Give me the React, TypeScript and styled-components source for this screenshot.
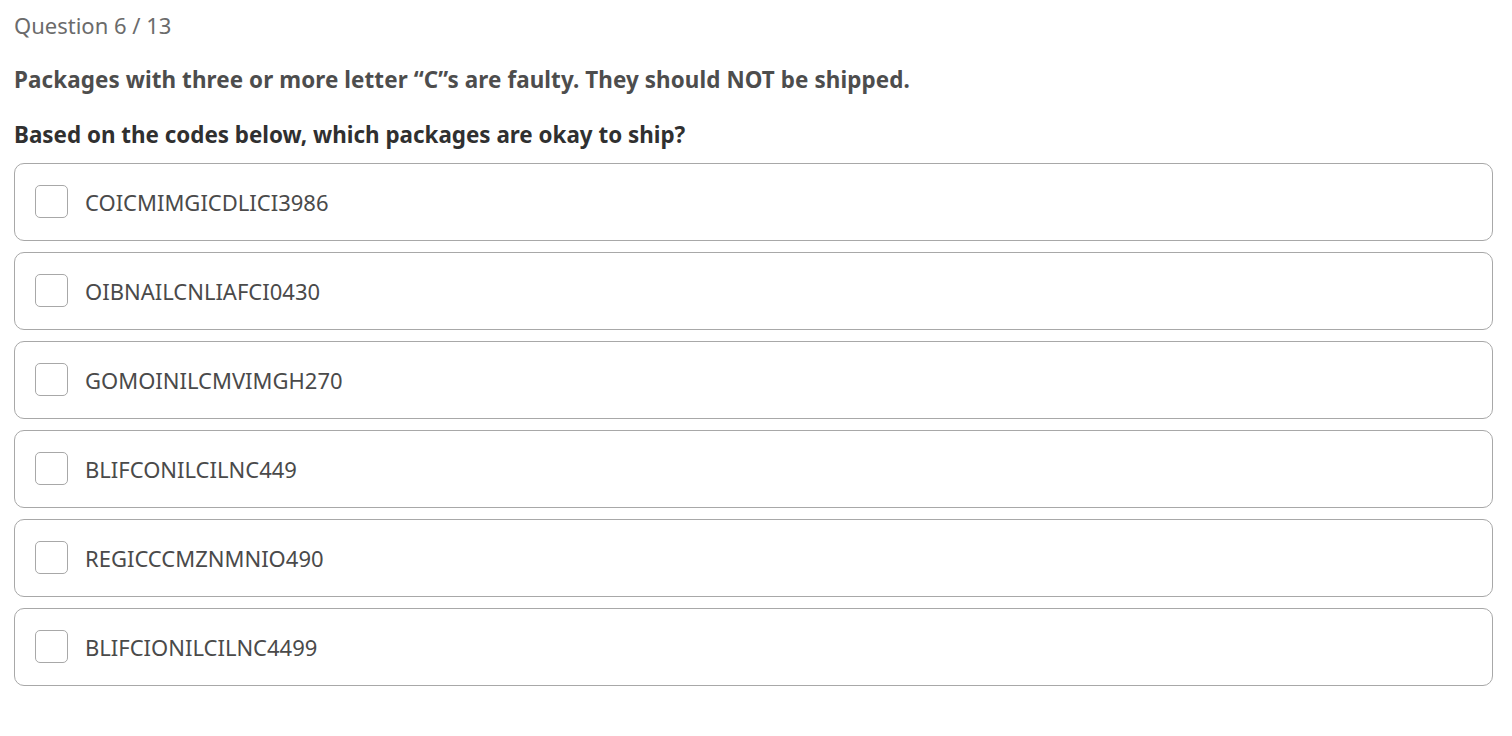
import React from "react";
import styled, { createGlobalStyle } from "styled-components";

const GlobalStyle = createGlobalStyle`
  html, body {
    margin: 0;
    padding: 0;
    background: #ffffff;
  }
  body {
    font-family: "Noto Sans", "Open Sans", sans-serif;
  }
`;

const Page = styled.main`
  padding: 10px 19px 40px 14px;
  display: flex;
  flex-direction: column;
`;

const Counter = styled.div`
  font-size: 22px;
  line-height: 30px;
  color: #6b6b6b;
  margin-bottom: 25px;
`;

const Statement = styled.p<{ $dark?: boolean }>`
  margin: 0 0 ${(p) => (p.$dark ? "13px" : "25px")};
  font-size: 22.4px;
  line-height: 30px;
  font-weight: 700;
  letter-spacing: ${(p) => (p.$dark ? "0" : "0.1px")};
  color: ${(p) => (p.$dark ? "#303030" : "#4d4d4d")};
`;

const OptionList = styled.div`
  display: flex;
  flex-direction: column;
  gap: 11px;
`;

const Option = styled.label`
  display: flex;
  align-items: center;
  gap: 17px;
  height: 78px;
  box-sizing: border-box;
  padding: 0 20px;
  border: 1px solid #a8a8a8;
  border-radius: 10px;
  background: #fff;
  cursor: pointer;
`;

const Box = styled.span`
  width: 33px;
  height: 33px;
  box-sizing: border-box;
  border: 1px solid #a8a8a8;
  border-radius: 5px;
  background: #fff;
  flex-shrink: 0;
  margin-top: -2px;
`;

const Code = styled.span`
  font-size: 22px;
  line-height: 30px;
  color: #4a4a4a;
`;

const codes = [
  "COICMIMGICDLICI3986",
  "OIBNAILCNLIAFCI0430",
  "GOMOINILCMVIMGH270",
  "BLIFCONILCILNC449",
  "REGICCCMZNMNIO490",
  "BLIFCIONILCILNC4499",
];

export default function App() {
  return (
    <>
      <GlobalStyle />
      <Page>
        <Counter>Question 6 / 13</Counter>
        <Statement>
          Packages with three or more letter “C”s are faulty. They should NOT be shipped.
        </Statement>
        <Statement $dark>Based on the codes below, which packages are okay to ship?</Statement>
        <OptionList>
          {codes.map((c) => (
            <Option key={c}>
              <Box />
              <Code>{c}</Code>
            </Option>
          ))}
        </OptionList>
      </Page>
    </>
  );
}
